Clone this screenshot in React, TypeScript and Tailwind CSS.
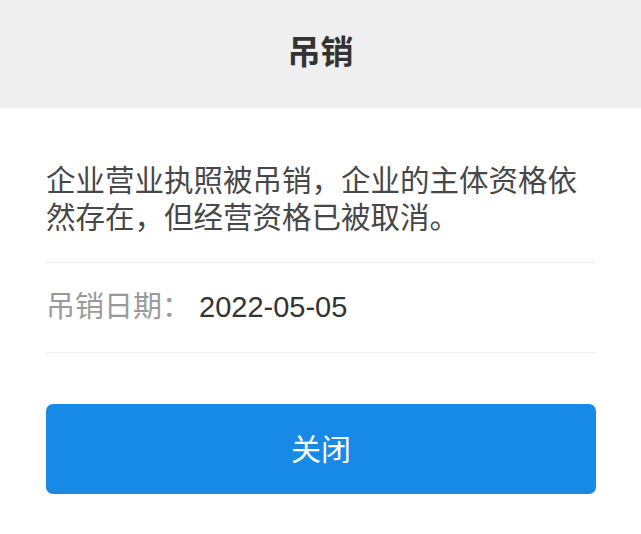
import React from "react";

export default function App() {
  return (
    <div
      className="w-[641px] h-[534px] bg-white overflow-hidden"
      style={{ fontFamily: '"Liberation Sans", "Noto Sans CJK SC", sans-serif' }}
    >
      <div className="h-[108px] bg-[#efefef] flex items-center justify-center pb-[3px]">
        <span className="text-[33px] font-bold text-[#333333] leading-none">吊销</span>
      </div>
      <div className="pl-[46px] pr-[45px]">
        <p className="pt-[54px] pb-[26px] text-[29.5px] leading-[37px] text-[#474747] border-b border-[#eeeeee]">
          企业营业执照被吊销，企业的主体资格依然存在，但经营资格已被取消。
        </p>
        <div className="h-[90px] flex items-center border-b border-[#eeeeee] text-[29px]">
          <span className="text-[#9a9a9a]">吊销日期：</span>
          <span className="ml-[8px] text-[#333333]">2022-05-05</span>
        </div>
        <button className="mt-[51px] w-full h-[90px] rounded-[7px] bg-[#168ae6] text-white text-[30px] flex items-center justify-center">
          关闭
        </button>
      </div>
    </div>
  );
}
